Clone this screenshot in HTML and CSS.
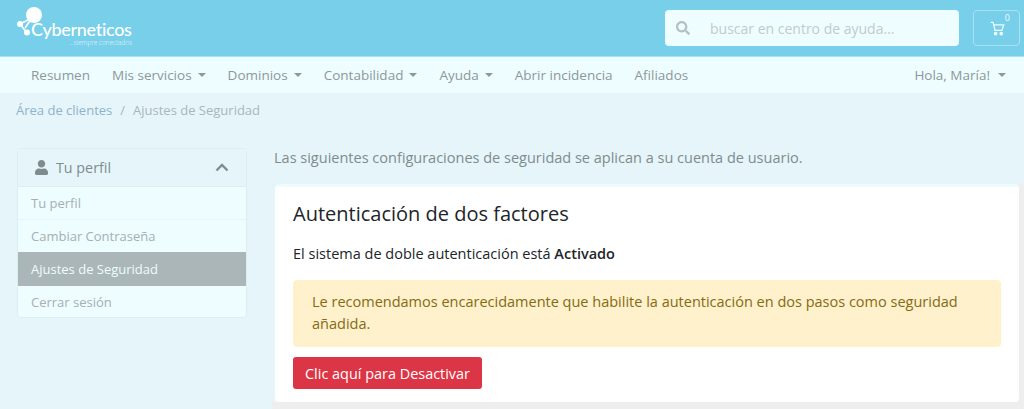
FILE: index.html
```html
<!DOCTYPE html>
<html lang="es">
<head>
<meta charset="utf-8">
<title>Ajustes de Seguridad</title>
<link rel="stylesheet" href="styles.css">
</head>
<body>
<header class="topbar">
  <a class="logo">
    <svg class="logo-mark" viewBox="0 0 30 36" width="30" height="36">
      <path d="M4 20 L14 15 M4 20 L11 29 M18 11 L9 24" stroke="#fff" stroke-width="1.600" fill="none"/>
      <circle cx="18" cy="11" r="8" fill="#fff"/>
      <circle cx="4" cy="20" r="3" fill="#fff"/>
      <circle cx="11" cy="28.500" r="3" fill="#fff"/>
    </svg>
    <span class="logo-name">Cyberneticos</span>
    <span class="logo-tag">...siempre conectados</span>
  </a>
  <div class="search">
    <svg class="search-icon" viewBox="0 0 512 512" width="14" height="14"><path fill="#b5c1c1" d="M505 442.700L405.300 343c-4.500-4.500-10.600-7-17-7H372c27.600-35.300 44-79.700 44-128C416 93.100 322.900 0 208 0S0 93.100 0 208s93.100 208 208 208c48.300 0 92.700-16.400 128-44v16.300c0 6.400 2.500 12.500 7 17l99.700 99.700c9.400 9.400 24.600 9.400 33.900 0l28.300-28.300c9.400-9.400 9.400-24.600.100-34zM208 336c-70.700 0-128-57.200-128-128 0-70.700 57.200-128 128-128 70.700 0 128 57.200 128 128 0 70.700-57.200 128-128 128z"/></svg>
    <span class="search-text">buscar en centro de ayuda...</span>
  </div>
  <a class="cart">
    <svg class="cart-icon" viewBox="0 0 24 24" width="15" height="15" fill="none" stroke="#eefdff" stroke-width="2"><path d="M1 2h4l3 13h11l3-9H6"/><circle cx="9" cy="20" r="2" fill="#eefdff"/><circle cx="18" cy="20" r="2" fill="#eefdff"/></svg>
    <sup class="cart-count">0</sup>
  </a>
</header>
<nav class="navbar">
  <ul class="nav-list">
    <li class="nav-item">Resumen</li>
    <li class="nav-item caret">Mis servicios</li>
    <li class="nav-item caret">Dominios</li>
    <li class="nav-item caret">Contabilidad</li>
    <li class="nav-item caret">Ayuda</li>
    <li class="nav-item">Abrir incidencia</li>
    <li class="nav-item">Afiliados</li>
  </ul>
  <div class="nav-item caret nav-user">Hola, María!</div>
</nav>
<div class="breadcrumb">
  <a class="crumb-link">Área de clientes</a>
  <span class="crumb-sep">/</span>
  <span class="crumb-current">Ajustes de Seguridad</span>
</div>
<main class="layout">
  <aside class="sidebar">
    <div class="side-head">
      <svg viewBox="0 0 448 512" width="13" height="15"><path fill="#7f8c8d" d="M224 256c70.700 0 128-57.300 128-128S294.700 0 224 0 96 57.300 96 128s57.300 128 128 128zm89.600 32h-16.700c-22.200 10.200-46.900 16-72.900 16s-50.600-5.800-72.900-16h-16.700C60.200 288 0 348.200 0 422.400V464c0 26.500 21.500 48 48 48h352c26.500 0 48-21.500 48-48v-41.600c0-74.200-60.200-134.400-134.400-134.400z"/></svg>
      <span class="side-title">Tu perfil</span>
      <svg class="chev" viewBox="0 0 14 9" width="14" height="9"><path d="M1.500 7.500 L7 2 L12.500 7.500" fill="none" stroke="#7f8c8d" stroke-width="2.400"/></svg>
    </div>
    <a class="side-link">Tu perfil</a>
    <a class="side-link">Cambiar Contraseña</a>
    <a class="side-link active">Ajustes de Seguridad</a>
    <a class="side-link">Cerrar sesión</a>
  </aside>
  <section class="content">
    <p class="intro">Las siguientes configuraciones de seguridad se aplican a su cuenta de usuario.</p>
    <div class="card-wrap">
      <div class="card">
        <h2 class="card-title">Autenticación de dos factores</h2>
        <p class="status">El sistema de doble autenticación está <strong>Activado</strong></p>
        <div class="alert">Le recomendamos encarecidamente que habilite la autenticación en dos pasos como seguridad añadida.</div>
        <a class="btn-danger">Clic aquí para Desactivar</a>
      </div>
    </div>
  </section>
</main>
</body>
</html>
```
FILE: styles.css
```css
* { box-sizing: border-box; }
html, body { margin: 0; height: 100%; overflow: hidden; }
body {
  background: #e5f5fa;
  font-family: "Open Sans", sans-serif;
  font-size: 14px;
  line-height: 21px;
  color: #212529;
}
.topbar {
  height: 57px;
  background: #78cfea;
  border-bottom: 1px solid #a8e2f2;
  display: flex;
  align-items: center;
  padding: 0 4px 0 16px;
}
.logo {
  position: relative;
  width: 116px;
  height: 44px;
  margin-top: -4px;
  color: #fff;
}
.logo-mark { position: absolute; left: 0; top: 0; }
.logo-name {
  position: absolute; left: 15px; top: 17px;
  font-family: "Lato", sans-serif;
  font-size: 18px; line-height: 17px; font-weight: 500; letter-spacing: -0.300px;
}
.logo-tag {
  position: absolute; right: 0; top: 35px;
  font-size: 6.400px; line-height: 8px; font-weight: 300; white-space: nowrap; color: #e4f6fb;
}
.search {
  margin-left: auto;
  width: 294px; height: 36px;
  background: #eefdff;
  border-radius: 4px;
  display: flex; align-items: center;
  padding-left: 11px;
}
.search-text { margin-left: 20px; font-size: 14px; color: #bfcccd; }
.cart {
  width: 47px; height: 36px;
  margin-left: 14px;
  border: 1px solid #a8e2f2;
  border-radius: 4px;
  display: flex; align-items: center; justify-content: flex-start;
  padding-left: 16px;
  position: relative;
}
.cart-icon { margin-top: 1px; }
.cart-count { position: absolute; right: 9px; top: 1px; font-size: 9px; line-height: 12px; color: #eefdff; }
.navbar {
  height: 36px;
  background: #eefdff;
  display: flex; align-items: center; justify-content: space-between;
  padding: 0 18px 0 31px;
}
.nav-list { display: flex; gap: 22px; list-style: none; margin: 0; padding: 0; }
.nav-item { font-size: 13.500px; color: #8c9899; white-space: nowrap; }
.caret::after {
  content: "";
  display: inline-block;
  margin-left: 6px;
  vertical-align: 3px;
  border-top: 4px solid #8c9899;
  border-left: 4px solid transparent;
  border-right: 4px solid transparent;
}
.nav-user::after { margin-left: 8px; }
.breadcrumb {
  height: 34px;
  display: flex; align-items: center; gap: 8px;
  padding-left: 16px;
  color: #a9b6bc;
  font-size: 13px;
}
.crumb-link { color: #8fb3cb; }
.layout {
  display: flex;
  gap: 27px;
  padding: 20px 0 0 17px;
  align-items: flex-start;
}
.sidebar {
  width: 230px;
  flex: none;
  margin-top: 1px;
  border: 1px solid #ddeef3;
  border-radius: 4px;
  background: #eefdff;
  overflow: hidden;
}
.side-head {
  height: 38px;
  background: #e5f5fa;
  border-bottom: 1px solid #ddeef3;
  display: flex; align-items: center;
  padding: 0 17px 0 17px;
  gap: 8px;
}
.side-title { font-size: 14.300px; color: #7f8c8d; }
.chev { margin-left: auto; }
.side-link {
  display: block;
  height: 33px;
  line-height: 33px;
  padding-left: 13px;
  font-size: 13px;
  color: #a4b0b2;
  border-bottom: 1px solid #e5f5f9;
}
.side-link:last-child { border-bottom: 0; height: 31px; }
.side-link.active {
  height: 34px;
  margin-top: -1px;
  line-height: 34px;
  background: #aab6b7;
  color: #eefdff;
  border-bottom-color: #aab6b7;
}
.content { flex: 1; min-width: 0; }
.intro { margin: 0; height: 37px; color: #7f8c8d; font-size: 14.500px; line-height: 21px; }
.card-wrap {
  background: #eeeeee;
  margin-left: -2px;
  padding: 0 5px 8px 3px;
}
.card {
  background: #fff;
  border-top: 3px solid #effcfe;
  border-radius: 4px;
  box-shadow: -3px 0 0 #e5f5fa;
  padding: 13px 18px 13px;
  height: 218px;
}
.card-title { margin: 0; font-size: 20px; line-height: 28px; font-weight: 400; color: #212529; }
.status { margin: 15px 0 0; font-size: 14.500px; line-height: 21px; }
.status strong { font-weight: 600; }
.alert {
  margin-top: 16px;
  height: 67px;
  background: #fef1cb;
  border-radius: 4px;
  color: #856b14;
  font-size: 14.500px;
  padding: 11px 19px;
  line-height: 22px;
}
.btn-danger {
  display: inline-block;
  margin-top: 10px;
  background: #dc3545;
  border-radius: 3px;
  color: #fff;
  font-size: 14.450px;
  line-height: 21px;
  padding: 6px 12px 5px;
}
```
